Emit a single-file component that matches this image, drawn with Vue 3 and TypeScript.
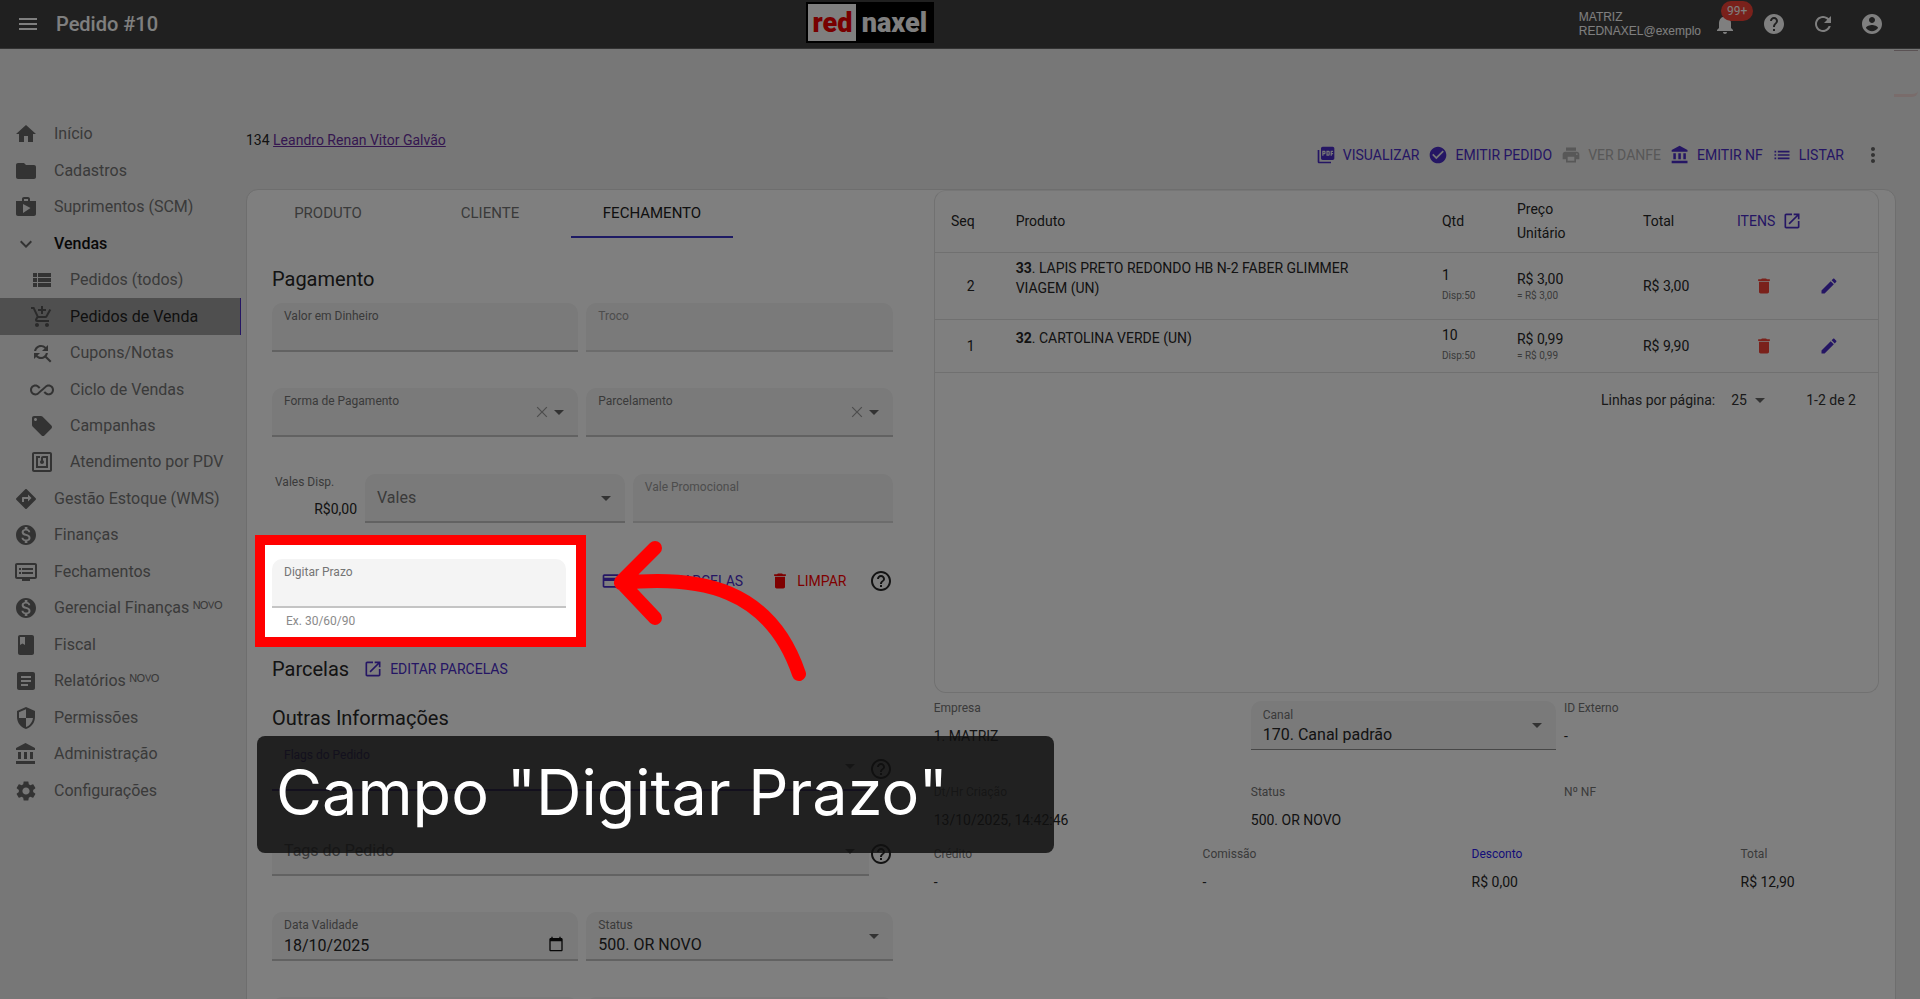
<script setup lang="ts">
import { ref } from 'vue'

const icons: Record<string, string> = {
  menu: 'M3 18h18v-2H3v2zm0-5h18v-2H3v2zm0-7v2h18V6H3z',
  home: 'M10 20v-6h4v6h5v-8h3L12 3 2 12h3v8z',
  folder: 'M10 4H4c-1.1 0-1.99.9-1.99 2L2 18c0 1.1.9 2 2 2h16c1.1 0 2-.9 2-2V8c0-1.1-.9-2-2-2h-8l-2-2z',
  shop: 'M16 6V4c0-1.11-.89-2-2-2h-4c-1.11 0-2 .89-2 2v2H2v13c0 1.11.89 2 2 2h16c1.11 0 2-.89 2-2V6h-6zm-6-2h4v2h-4V4zM9 18V9l7.5 4L9 18z',
  chevron: 'M7.41 8.59 12 13.17l4.59-4.58L18 10l-6 6-6-6 1.41-1.41z',
  viewList: 'M3 14h4v-4H3v4zm0 5h4v-4H3v4zM3 9h4V5H3v4zm5 5h13v-4H8v4zm0 5h13v-4H8v4zM8 5v4h13V5H8z',
  cart: 'M11 9h2V6h3V4h-3V1h-2v3H8v2h3v3zm-4 9c-1.1 0-1.99.9-1.99 2S5.9 22 7 22s2-.9 2-2-.9-2-2-2zm10 0c-1.1 0-1.99.9-1.99 2s.89 2 1.99 2 2-.9 2-2-.9-2-2-2zm-9.83-3.25.03-.12.9-1.63h7.45c.75 0 1.41-.41 1.75-1.03l3.86-7.01L19.42 4h-.01l-1.1 2-2.76 5H8.53l-.13-.27L6.16 6l-.95-2-.94-2H1v2h2l3.6 7.59-1.35 2.45c-.16.28-.25.61-.25.96 0 1.1.9 2 2 2h12v-2H7.42c-.13 0-.25-.11-.25-.25z',
  findReplace: 'M11 6c1.38 0 2.63.56 3.54 1.46L12 10h6V4l-2.05 2.05C14.68 4.78 12.93 4 11 4c-3.53 0-6.43 2.61-6.92 6H6.1c.46-2.28 2.48-4 4.9-4zm5.64 9.14c.66-.9 1.12-1.97 1.28-3.14H15.9c-.46 2.28-2.48 4-4.9 4-1.38 0-2.63-.56-3.54-1.46L10 12H4v6l2.05-2.05C7.32 17.22 9.07 18 11 18c1.55 0 2.98-.51 4.14-1.36L20 21.49 21.49 20l-4.85-4.86z',
  infinite: 'M18.6 6.62c-1.44 0-2.8.56-3.77 1.53L12 10.66 10.48 12h.01L7.8 14.39c-.64.64-1.49.99-2.4.99-1.87 0-3.39-1.51-3.39-3.38S3.53 8.62 5.4 8.62c.91 0 1.76.35 2.44 1.03l1.13 1 1.51-1.34L9.22 8.2C8.2 7.18 6.84 6.62 5.4 6.62 2.42 6.62 0 9.04 0 12s2.42 5.38 5.4 5.38c1.44 0 2.8-.56 3.77-1.53l2.83-2.5.01.01L13.52 12h-.01l2.69-2.39c.64-.64 1.49-.99 2.4-.99 1.87 0 3.39 1.51 3.39 3.38s-1.52 3.38-3.39 3.38c-.9 0-1.76-.35-2.44-1.03l-1.14-1.01-1.51 1.34 1.27 1.12c1.02 1.01 2.37 1.57 3.82 1.57 2.98 0 5.4-2.41 5.4-5.38s-2.42-5.37-5.4-5.37z',
  offer: 'M21.41 11.58l-9-9C12.05 2.22 11.55 2 11 2H4c-1.1 0-2 .9-2 2v7c0 .55.22 1.05.59 1.42l9 9c.36.36.86.58 1.41.58.55 0 1.05-.22 1.41-.59l7-7c.37-.36.59-.86.59-1.41 0-.55-.23-1.06-.59-1.42zM5.5 7C4.67 7 4 6.33 4 5.5S4.67 4 5.5 4 7 4.67 7 5.5 6.33 7 5.5 7z',
  nfc: 'M20 2H4c-1.1 0-2 .9-2 2v16c0 1.1.9 2 2 2h16c1.1 0 2-.9 2-2V4c0-1.1-.9-2-2-2zm0 18H4V4h16v16zM18 6h-5c-1.1 0-2 .9-2 2v2.28c-.6.35-1 .98-1 1.72 0 1.1.9 2 2 2s2-.9 2-2c0-.74-.4-1.38-1-1.72V8h3v8H8V8h2V6H6v12h12V6z',
  directions: 'M21.71 11.29l-9-9c-.39-.39-1.02-.39-1.41 0l-9 9c-.39.39-.39 1.02 0 1.41l9 9c.39.39 1.02.39 1.41 0l9-9c.39-.38.39-1.01 0-1.41zM14 14.5V12h-4v3H8v-4c0-.55.45-1 1-1h5V7.5l3.5 3.5-3.5 3.5z',
  money: 'M12 2C6.48 2 2 6.48 2 12s4.48 10 10 10 10-4.48 10-10S17.52 2 12 2zm1.41 16.09V20h-2.67v-1.93c-1.71-.36-3.16-1.46-3.27-3.4h1.96c.1 1.05.82 1.87 2.65 1.87 1.96 0 2.4-.98 2.4-1.59 0-.83-.44-1.61-2.67-2.14-2.48-.6-4.18-1.62-4.18-3.67 0-1.72 1.39-2.84 3.11-3.21V4h2.67v1.95c1.86.45 2.79 1.86 2.85 3.39H14.3c-.05-1.11-.64-1.87-2.22-1.87-1.5 0-2.4.68-2.4 1.64 0 .84.65 1.39 2.67 1.91s4.18 1.39 4.18 3.91c-.01 1.83-1.38 2.83-3.12 3.16z',
  dvr: 'M21 3H3c-1.1 0-2 .9-2 2v12c0 1.1.9 2 2 2h5v2h8v-2h5c1.1 0 1.99-.9 1.99-2L23 5c0-1.1-.9-2-2-2zm0 14H3V5h18v12zm-2-9H8v2h11V8zm0 4H8v2h11v-2zM7 8H5v2h2V8zm0 4H5v2h2v-2z',
  book: 'M18 2H6c-1.1 0-2 .9-2 2v16c0 1.1.9 2 2 2h12c1.1 0 2-.9 2-2V4c0-1.1-.9-2-2-2zM6 4h5v8l-2.5-1.5L6 12V4z',
  article: 'M19 3H5c-1.1 0-2 .9-2 2v14c0 1.1.9 2 2 2h14c1.1 0 2-.9 2-2V5c0-1.1-.9-2-2-2zm-5 14H7v-2h7v2zm3-4H7v-2h10v2zm0-4H7V7h10v2z',
  security: 'M12 1L3 5v6c0 5.55 3.84 10.74 9 12 5.16-1.26 9-6.45 9-12V5l-9-4zm0 10.99h7c-.53 4.12-3.28 7.79-7 8.94V12H5V6.3l7-3.11v8.8z',
  bank: 'M4 10v7h3v-7H4zm6 0v7h3v-7h-3zM2 22h19v-3H2v3zm14-12v7h3v-7h-3zm-4.5-9L2 6v2h19V6l-9.5-5z',
  settings: 'M19.14 12.94c.04-.3.06-.61.06-.94 0-.32-.02-.64-.07-.94l2.03-1.58c.18-.14.23-.41.12-.61l-1.92-3.32c-.12-.22-.37-.29-.59-.22l-2.39.96c-.5-.38-1.03-.7-1.62-.94l-.36-2.54c-.04-.24-.24-.41-.48-.41h-3.84c-.24 0-.43.17-.47.41l-.36 2.54c-.59.24-1.13.57-1.62.94l-2.39-.96c-.22-.08-.47 0-.59.22L2.74 8.87c-.12.21-.08.47.12.61l2.03 1.58c-.05.3-.09.63-.09.94s.02.64.07.94l-2.03 1.58c-.18.14-.23.41-.12.61l1.92 3.32c.12.22.37.29.59.22l2.39-.96c.5.38 1.03.7 1.62.94l.36 2.54c.05.24.24.41.48.41h3.84c.24 0 .44-.17.47-.41l.36-2.54c.59-.24 1.13-.56 1.62-.94l2.39.96c.22.08.47 0 .59-.22l1.92-3.32c.12-.22.07-.47-.12-.61l-2.01-1.58zM12 15.6c-1.98 0-3.6-1.62-3.6-3.6s1.62-3.6 3.6-3.6 3.6 1.62 3.6 3.6-1.62 3.6-3.6 3.6z',
  pdf: 'M20 2H8c-1.1 0-2 .9-2 2v12c0 1.1.9 2 2 2h12c1.1 0 2-.9 2-2V4c0-1.1-.9-2-2-2zm-8.5 7.5c0 .83-.67 1.5-1.5 1.5H9v2H7.5V7H10c.83 0 1.5.67 1.5 1.5v1zm5 2c0 .83-.67 1.5-1.5 1.5h-2.5V7H15c.83 0 1.5.67 1.5 1.5v3zm4-3H19v1h1.5V11H19v2h-1.5V7h3v1.5zM9 9.5h1v-1H9v1zM4 6H2v14c0 1.1.9 2 2 2h14v-2H4V6zm10 5.5h1v-3h-1v3z',
  check: 'M12 2C6.48 2 2 6.48 2 12s4.48 10 10 10 10-4.48 10-10S17.52 2 12 2zm-2 15l-5-5 1.41-1.41L10 14.17l7.59-7.59L19 8l-9 9z',
  print: 'M19 8H5c-1.66 0-3 1.34-3 3v6h4v4h12v-4h4v-6c0-1.66-1.34-3-3-3zm-3 11H8v-5h8v5zm3-7c-.55 0-1-.45-1-1s.45-1 1-1 1 .45 1 1-.45 1-1 1zm-1-9H6v4h12V3z',
  list: 'M3 13h2v-2H3v2zm0 4h2v-2H3v2zm0-8h2V7H3v2zm4 4h14v-2H7v2zm0 4h14v-2H7v2zM7 7v2h14V7H7z',
  more: 'M12 8c1.1 0 2-.9 2-2s-.9-2-2-2-2 .9-2 2 .9 2 2 2zm0 2c-1.1 0-2 .9-2 2s.9 2 2 2 2-.9 2-2-.9-2-2-2zm0 6c-1.1 0-2 .9-2 2s.9 2 2 2 2-.9 2-2-.9-2-2-2z',
  bell: 'M12 22c1.1 0 2-.9 2-2h-4c0 1.1.89 2 2 2zm6-6v-5c0-3.07-1.64-5.64-4.5-6.32V4c0-.83-.67-1.5-1.5-1.5s-1.5.67-1.5 1.5v.68C7.63 5.36 6 7.92 6 11v5l-2 2v1h16v-1l-2-2z',
  help: 'M12 2C6.48 2 2 6.48 2 12s4.48 10 10 10 10-4.48 10-10S17.52 2 12 2zm1 17h-2v-2h2v2zm2.07-7.75l-.9.92C13.45 12.9 13 13.5 13 15h-2v-.5c0-1.1.45-2.1 1.17-2.83l1.24-1.26c.37-.36.59-.86.59-1.41 0-1.1-.9-2-2-2s-2 .9-2 2H8c0-2.21 1.79-4 4-4s4 1.79 4 4c0 .88-.36 1.68-.93 2.25z',
  helpOutline: 'M11 18h2v-2h-2v2zm1-16C6.48 2 2 6.48 2 12s4.48 10 10 10 10-4.48 10-10S17.52 2 12 2zm0 18c-4.41 0-8-3.59-8-8s3.59-8 8-8 8 3.59 8 8-3.59 8-8 8zm0-14c-2.21 0-4 1.79-4 4h2c0-1.1.9-2 2-2s2 .9 2 2c0 2-3 1.75-3 5h2c0-2.25 3-2.5 3-5 0-2.21-1.79-4-4-4z',
  refresh: 'M17.65 6.35C16.2 4.9 14.21 4 12 4c-4.42 0-7.99 3.58-7.99 8s3.57 8 7.99 8c3.73 0 6.84-2.55 7.73-6h-2.08c-.82 2.33-3.04 4-5.65 4-3.31 0-6-2.69-6-6s2.69-6 6-6c1.66 0 3.14.69 4.22 1.78L13 11h7V4l-2.35 2.35z',
  account: 'M12 2C6.48 2 2 6.48 2 12s4.48 10 10 10 10-4.48 10-10S17.52 2 12 2zm0 3c1.66 0 3 1.34 3 3s-1.34 3-3 3-3-1.34-3-3 1.34-3 3-3zm0 14.2c-2.5 0-4.71-1.28-6-3.22.03-1.99 4-3.08 6-3.08 1.99 0 5.97 1.09 6 3.08-1.29 1.94-3.5 3.22-6 3.22z',
  trash: 'M6 19c0 1.1.9 2 2 2h8c1.1 0 2-.9 2-2V7H6v12zM19 4h-3.5l-1-1h-5l-1 1H5v2h14V4z',
  edit: 'M3 17.25V21h3.75L17.81 9.94l-3.75-3.75L3 17.25zM20.71 7.04c.39-.39.39-1.02 0-1.41l-2.34-2.34c-.39-.39-1.02-.39-1.41 0l-1.83 1.83 3.75 3.75 1.83-1.83z',
  open: 'M19 19H5V5h7V3H5c-1.11 0-2 .9-2 2v14c0 1.1.89 2 2 2h14c1.1 0 2-.9 2-2v-7h-2v7zM14 3v2h3.59l-9.83 9.83 1.41 1.41L19 6.41V10h2V3h-7z',
  card: 'M20 4H4c-1.11 0-1.99.89-1.99 2L2 18c0 1.11.89 2 2 2h16c1.11 0 2-.89 2-2V6c0-1.11-.89-2-2-2zm0 14H4v-6h16v6zm0-10H4V6h16v2z',
  arrow: 'M7 10l5 5 5-5z',
  close: 'M18.3 6.7l-1-1L12 11 6.7 5.7l-1 1L11 12l-5.3 5.3 1 1L12 13l5.3 5.3 1-1L13 12z',
  calendar: 'M20 3h-1V1h-2v2H7V1H5v2H4c-1.1 0-2 .9-2 2v16c0 1.1.9 2 2 2h16c1.1 0 2-.9 2-2V5c0-1.1-.9-2-2-2zm0 18H4V8h16v13z',
}

interface NavItem { label: string; icon: string; sub?: boolean; open?: boolean; active?: boolean; isNew?: boolean }
const nav: NavItem[] = [
  { label: 'Início', icon: 'home' },
  { label: 'Cadastros', icon: 'folder' },
  { label: 'Suprimentos (SCM)', icon: 'shop' },
  { label: 'Vendas', icon: 'chevron', open: true },
  { label: 'Pedidos (todos)', icon: 'viewList', sub: true },
  { label: 'Pedidos de Venda', icon: 'cart', sub: true, active: true },
  { label: 'Cupons/Notas', icon: 'findReplace', sub: true },
  { label: 'Ciclo de Vendas', icon: 'infinite', sub: true },
  { label: 'Campanhas', icon: 'offer', sub: true },
  { label: 'Atendimento por PDV', icon: 'nfc', sub: true },
  { label: 'Gestão Estoque (WMS)', icon: 'directions' },
  { label: 'Finanças', icon: 'money' },
  { label: 'Fechamentos', icon: 'dvr' },
  { label: 'Gerencial Finanças', icon: 'money', isNew: true },
  { label: 'Fiscal', icon: 'book' },
  { label: 'Relatórios', icon: 'article', isNew: true },
  { label: 'Permissões', icon: 'security' },
  { label: 'Administração', icon: 'bank' },
  { label: 'Configurações', icon: 'settings' },
]

const actions = [
  { label: 'VISUALIZAR', icon: 'pdf', disabled: false },
  { label: 'EMITIR PEDIDO', icon: 'check', disabled: false },
  { label: 'VER DANFE', icon: 'print', disabled: true },
  { label: 'EMITIR NF', icon: 'bank', disabled: false },
  { label: 'LISTAR', icon: 'list', disabled: false },
]

const tabs = ['PRODUTO', 'CLIENTE', 'FECHAMENTO']
const tab = ref('FECHAMENTO')

const items = [
  { seq: 2, code: '33', name: 'LAPIS PRETO REDONDO HB N-2 FABER GLIMMER VIAGEM (UN)', qty: 1, stock: 50, price: 'R$ 3,00', total: 'R$ 3,00' },
  { seq: 1, code: '32', name: 'CARTOLINA VERDE (UN)', qty: 10, stock: 50, price: 'R$ 0,99', total: 'R$ 9,90' },
]

const cash = ref('')
const change = ref('')
const promo = ref('')
const term = ref('')
const validity = ref('18/10/2025')
</script>

<template>
  <div class="page">
    <header class="topbar">
      <div class="topbar-left">
        <button class="icon-btn" aria-label="Menu"><svg class="icon" viewBox="0 0 24 24"><path :d="icons.menu" /></svg></button>
        <h1>Pedido #10</h1>
      </div>
      <div class="logo"><span class="logo-red">red</span><span class="logo-rest">naxel</span></div>
      <div class="topbar-right">
        <div class="tenant">MATRIZ<br>REDNAXEL@exemplo</div>
        <button class="icon-btn bell" aria-label="Notificações">
          <svg class="icon" viewBox="0 0 24 24"><path :d="icons.bell" /></svg>
          <span class="badge">99+</span>
        </button>
        <button class="icon-btn" aria-label="Ajuda"><svg class="icon" viewBox="0 0 24 24"><path :d="icons.help" /></svg></button>
        <button class="icon-btn" aria-label="Atualizar"><svg class="icon" viewBox="0 0 24 24"><path :d="icons.refresh" /></svg></button>
        <button class="icon-btn" aria-label="Conta"><svg class="icon" viewBox="0 0 24 24"><path :d="icons.account" /></svg></button>
      </div>
    </header>

    <div class="toast-edge"></div>

    <div class="body">
      <nav class="sidebar">
        <a v-for="item in nav" :key="item.label" href="#" :class="{ sub: item.sub, open: item.open, active: item.active }">
          <svg class="icon" viewBox="0 0 24 24"><path :d="icons[item.icon]" /></svg>
          <span>{{ item.label }} <span v-if="item.isNew" class="new">ᴺᴼⱽᴼ</span></span>
        </a>
      </nav>

      <main>
        <div class="heading">
          <p class="client">134 <a href="#">Leandro Renan Vitor Galvão</a></p>
          <div class="toolbar">
            <button v-for="a in actions" :key="a.label" class="text-btn" :disabled="a.disabled">
              <svg class="icon small" viewBox="0 0 24 24"><path :d="icons[a.icon]" /></svg>{{ a.label }}
            </button>
            <button class="icon-btn more" aria-label="Mais opções"><svg class="icon" viewBox="0 0 24 24"><path :d="icons.more" /></svg></button>
          </div>
        </div>

        <div class="card">
          <section class="left">
            <div class="tabs" role="tablist">
              <button v-for="t in tabs" :key="t" role="tab" :aria-selected="t === tab" :class="{ selected: t === tab }" @click="tab = t">{{ t }}</button>
            </div>

            <form class="form" @submit.prevent>
              <h2>Pagamento</h2>
              <div class="row two">
                <div class="field">
                  <div class="stack"><label for="cash">Valor em Dinheiro</label><input id="cash" v-model="cash"></div>
                </div>
                <div class="field disabled">
                  <div class="stack"><label for="change">Troco</label><input id="change" v-model="change" disabled></div>
                </div>
              </div>
              <div class="row two">
                <div class="field">
                  <div class="stack"><label for="method">Forma de Pagamento</label><select id="method"><option></option></select></div>
                  <button class="clear" type="button" aria-label="Limpar forma de pagamento"><svg viewBox="0 0 24 24"><path :d="icons.close" /></svg></button>
                  <svg class="caret" viewBox="0 0 24 24"><path :d="icons.arrow" /></svg>
                </div>
                <div class="field">
                  <div class="stack"><label for="split">Parcelamento</label><select id="split"><option></option></select></div>
                  <button class="clear" type="button" aria-label="Limpar parcelamento"><svg viewBox="0 0 24 24"><path :d="icons.close" /></svg></button>
                  <svg class="caret" viewBox="0 0 24 24"><path :d="icons.arrow" /></svg>
                </div>
              </div>
              <div class="row vouchers">
                <dl class="voucher-sum"><dt>Vales Disp.</dt><dd>R$0,00</dd></dl>
                <div class="field resting">
                  <div class="stack"><label for="voucher">Vales</label><select id="voucher"><option></option></select></div>
                  <svg class="caret" viewBox="0 0 24 24"><path :d="icons.arrow" /></svg>
                </div>
                <div class="field disabled">
                  <div class="stack"><label for="promo">Vale Promocional</label><input id="promo" v-model="promo" disabled></div>
                </div>
              </div>
              <div class="row term-row">
                <div class="term">
                  <div class="field">
                    <div class="stack"><label for="term">Digitar Prazo</label><input id="term" v-model="term" aria-describedby="term-help"></div>
                  </div>
                  <p id="term-help" class="helper">Ex. 30/60/90</p>
                  <div class="guide">
                    <div class="spotlight"></div>
                    <svg class="pointer" viewBox="0 0 210 150"><path d="M62 18 L28 52 L62 88 M28 53 C107 45 177 58 206 144" /></svg>
                    <p class="caption">Campo "Digitar Prazo"</p>
                  </div>
                </div>
                <div class="term-actions">
                  <button class="text-btn" type="button"><svg class="icon small" viewBox="0 0 24 24"><path :d="icons.card" /></svg>GERAR PARCELAS</button>
                  <button class="text-btn danger" type="button"><svg class="icon small" viewBox="0 0 24 24"><path :d="icons.trash" /></svg>LIMPAR</button>
                  <button class="icon-btn" type="button" aria-label="Ajuda sobre o prazo"><svg class="icon" viewBox="0 0 24 24"><path :d="icons.helpOutline" /></svg></button>
                </div>
              </div>

              <h2>Parcelas <button class="text-btn" type="button"><svg class="icon small" viewBox="0 0 24 24"><path :d="icons.open" /></svg>EDITAR PARCELAS</button></h2>
              <h2>Outras Informações</h2>
              <div class="row helped">
                <div class="field focused">
                  <div class="stack"><label for="flags">Flags do Pedido</label><select id="flags"><option></option></select></div>
                  <svg class="caret" viewBox="0 0 24 24"><path :d="icons.arrow" /></svg>
                </div>
                <button class="icon-btn" type="button" aria-label="Ajuda sobre flags"><svg class="icon" viewBox="0 0 24 24"><path :d="icons.helpOutline" /></svg></button>
              </div>
              <div class="row helped">
                <div class="field resting">
                  <div class="stack"><label for="tags">Tags do Pedido</label><select id="tags"><option></option></select></div>
                  <svg class="caret" viewBox="0 0 24 24"><path :d="icons.arrow" /></svg>
                </div>
                <button class="icon-btn" type="button" aria-label="Ajuda sobre tags"><svg class="icon" viewBox="0 0 24 24"><path :d="icons.helpOutline" /></svg></button>
              </div>
              <div class="row two">
                <div class="field">
                  <div class="stack"><label for="validity">Data Validade</label><input id="validity" v-model="validity"></div>
                  <button class="date-btn" type="button" aria-label="Abrir calendário"><svg viewBox="0 0 24 24"><path :d="icons.calendar" /></svg></button>
                </div>
                <div class="field">
                  <div class="stack"><label for="status">Status</label><select id="status"><option>500. OR NOVO</option></select></div>
                  <svg class="caret" viewBox="0 0 24 24"><path :d="icons.arrow" /></svg>
                </div>
              </div>
              <div class="row two">
                <div class="field"></div>
                <div class="field"></div>
              </div>
            </form>
          </section>

          <section class="right">
            <div class="panel">
              <table>
                <colgroup><col class="c-seq"><col><col class="c-qty"><col class="c-price"><col class="c-total"><col class="c-act"></colgroup>
                <thead>
                  <tr>
                    <th class="seq">Seq</th><th>Produto</th><th>Qtd</th><th>Preço<br>Unitário</th><th>Total</th>
                    <th><button class="text-btn">ITENS<svg class="icon small" viewBox="0 0 24 24"><path :d="icons.open" /></svg></button></th>
                  </tr>
                </thead>
                <tbody>
                  <tr v-for="it in items" :key="it.seq">
                    <td class="seq">{{ it.seq }}</td>
                    <td class="product"><b>{{ it.code }}</b>. {{ it.name }}</td>
                    <td>{{ it.qty }}<small class="stock">Disp:{{ it.stock }}</small></td>
                    <td>{{ it.price }}<small>= {{ it.price }}</small></td>
                    <td>{{ it.total }}</td>
                    <td>
                      <div class="row-actions">
                        <button class="icon-btn del" aria-label="Excluir item"><svg class="icon small" viewBox="0 0 24 24"><path :d="icons.trash" /></svg></button>
                        <button class="icon-btn edit" aria-label="Editar item"><svg class="icon small" viewBox="0 0 24 24"><path :d="icons.edit" /></svg></button>
                      </div>
                    </td>
                  </tr>
                </tbody>
              </table>
              <div class="pager">
                <label for="per-page">Linhas por página:</label>
                <span class="per-page"><select id="per-page"><option>25</option></select><svg class="caret" viewBox="0 0 24 24"><path :d="icons.arrow" /></svg></span>
                <span>1-2 de 2</span>
              </div>
            </div>

            <div class="info three first">
              <dl><dt>Empresa</dt><dd>1. MATRIZ</dd></dl>
              <div class="field channel">
                <div class="stack"><label for="channel">Canal</label><select id="channel"><option>170. Canal padrão</option></select></div>
                <svg class="caret" viewBox="0 0 24 24"><path :d="icons.arrow" /></svg>
              </div>
              <dl><dt>ID Externo</dt><dd>-</dd></dl>
            </div>
            <div class="info three second">
              <dl><dt>Dt/Hr Criação</dt><dd>13/10/2025, 14:42:46</dd></dl>
              <dl class="status"><dt>Status</dt><dd>500. OR NOVO</dd></dl>
              <dl><dt>Nº NF</dt><dd></dd></dl>
            </div>
            <div class="info four">
              <dl><dt>Crédito</dt><dd>-</dd></dl>
              <dl><dt>Comissão</dt><dd>-</dd></dl>
              <dl><dt><a href="#">Desconto</a></dt><dd>R$ 0,00</dd></dl>
              <dl><dt>Total</dt><dd>R$ 12,90</dd></dl>
            </div>
          </section>
        </div>
      </main>
    </div>
  </div>
</template>

<style>
body { background: #eee; }
</style>

<style scoped>
.page {
  --accent: #4a2cc8;
  --muted: #757575;
  position: relative;
  height: 100vh;
  overflow: hidden;
  background: #eee;
  color: #262626;
  font: 14px/20px Roboto, sans-serif;
}
* { box-sizing: border-box; }
h1, h2, p, dl, dd { margin: 0; }
button, input, select { font: inherit; color: inherit; border: 0; padding: 0; margin: 0; background: none; outline: 0; }
select { appearance: none; opacity: 1; }
button { cursor: pointer; }
.icon { display: block; width: 24px; height: 24px; fill: currentColor; flex: none; }
.icon.small { width: 20px; height: 20px; }
.icon-btn { display: grid; place-items: center; }

.topbar { display: grid; grid-template-columns: 9fr auto 11fr; align-items: center; height: 49px; background: #414141; color: #fff; border-bottom: 1px solid #666; }
.topbar-left { display: flex; align-items: center; gap: 16px; padding-left: 16px; }
h1 { font-size: 20px; font-weight: 500; line-height: 24px; }
.logo { display: flex; align-self: start; height: 41px; margin-top: 2px; padding: 2px; background: #000; font-family: Roboto, sans-serif; font-size: 27px; font-weight: 900; line-height: 38px; }
.logo-red { width: 48px; background: #fff; color: #f00000; text-align: center; }
.logo-rest { width: 76px; text-align: center; }
.topbar-right { display: flex; align-items: center; justify-content: flex-end; gap: 25px; padding-right: 36px; }
.tenant { margin-right: -13px; font: 12px/14px "Liberation Sans", sans-serif; }
.bell { position: relative; }
.badge { position: absolute; left: 8px; top: -11px; padding: 0 6px; border-radius: 10px; background: #f44336; font-size: 12px; line-height: 20px; }
.toast-edge { position: absolute; top: 50px; right: 2px; width: 24px; height: 47px; border-top: 1px solid #b4a4a8; border-bottom: 3px solid #f2d8d6; border-bottom-right-radius: 6px; }

.body { display: flex; }
.sidebar { display: flex; flex-direction: column; flex: none; width: 241px; height: 760px; padding-top: 67px; font-size: 16px; }
.sidebar a { display: flex; flex: 1; align-items: center; gap: 16px; padding-left: 14px; color: var(--muted); text-decoration: none; white-space: nowrap; }
.sidebar a .icon { color: #666; }
.sidebar a.sub { padding-left: 30px; }
.sidebar a.open { color: #111; font-weight: 500; }
.sidebar a.active { background: #9e9e9e; color: #212121; border-right: 1px solid var(--accent); }
.sidebar a.active .icon { color: #555; }

main { flex: 1; min-width: 0; padding: 76px 24px 0 5px; }
.heading { display: flex; justify-content: space-between; height: 64px; padding-right: 11px; }
.client { line-height: 30px; }
.client a { color: #6a2fa0; }
.toolbar { display: flex; align-items: center; gap: 9px; height: 36px; margin-top: 12px; }
.text-btn { display: inline-flex; align-items: center; gap: 7px; color: var(--accent); font-size: 14px; line-height: 20px; white-space: nowrap; }
.text-btn:disabled { color: #b0b0b0; }
.text-btn.danger { color: #f00; }
.more { margin-left: 8px; color: #666; }

.card { display: grid; grid-template-columns: 5fr 7fr; border: 1px solid #dcdcdc; border-radius: 12px; background: #fff; }
.tabs { display: flex; height: 48px; }
.tabs button { width: 162px; color: var(--muted); font-size: 15px; border-bottom: 2px solid transparent; }
.tabs button.selected { color: #212121; border-bottom-color: #3a35c8; }
.form { padding: 16px 41px 0 25px; }
h2 { display: flex; align-items: center; gap: 14px; height: 49px; font-size: 20px; font-weight: 400; line-height: 24px; }
.row { display: grid; gap: 0 8px; height: 85px; align-items: start; }
.two { grid-template-columns: 1fr 1fr; }
.vouchers { grid-template-columns: 85px 1fr 1fr; height: 86px; padding-top: 1px; }
.voucher-sum dt { padding-left: 3px; color: var(--muted); font-size: 12px; line-height: 16px; }
.voucher-sum dd { margin-top: 9px; text-align: right; }

.field { position: relative; display: flex; align-items: center; height: 49px; padding: 0 7px 0 12px; border-bottom: 2px solid #c4c4c4; border-radius: 10px 10px 0 0; background: #f4f4f4; }
.stack { display: flex; flex-direction: column; flex: 1; min-width: 0; height: 47px; padding-top: 5px; }
.stack label { color: var(--muted); font-size: 12px; line-height: 16px; }
.stack input, .stack select { width: 100%; height: 24px; font-size: 16px; }
.field.disabled { border-bottom-color: #d8d8d8; }
.field.disabled label { color: #9a9a9a; }
.field.focused { border-bottom-color: var(--accent); }
.field.focused label { color: var(--accent); }
.resting .stack { padding-top: 0; }
.resting label { font-size: 16px; line-height: 48px; }
.resting select { position: absolute; inset: 0; height: 100%; }
.caret { flex: none; width: 24px; height: 24px; fill: #666; pointer-events: none; }
.clear { width: 20px; height: 20px; margin-right: -5px; color: #999; }
.clear svg { display: block; fill: currentColor; }
.date-btn { align-self: flex-end; width: 16px; height: 16px; margin: 0 7px 7px 0; color: #111; }
.date-btn svg { display: block; fill: currentColor; }

.term-row { grid-template-columns: 294px 1fr; }
.term { position: relative; }
.helper { margin-top: 5px; padding-left: 14px; color: #8a8a8a; font-size: 12px; line-height: 16px; }
.term-actions { display: flex; align-items: center; height: 44px; padding-left: 27px; }
.term-actions .danger { margin-left: 27px; }
.term-actions .icon-btn { margin-left: auto; }
.helped { grid-template-columns: 1fr 24px; gap: 0; }
.helped .icon-btn { height: 54px; }

.guide { position: absolute; inset: 0; z-index: 5; pointer-events: none; }
.spotlight { position: absolute; left: -17px; top: -24px; width: 331px; height: 112px; border: 10px solid #f00; box-shadow: 0 0 0 3000px rgba(0, 0, 0, .5); }
.pointer { position: absolute; left: 321px; top: -29px; width: 210px; height: 150px; fill: none; stroke: #f00; stroke-width: 14; stroke-linecap: round; stroke-linejoin: round; overflow: visible; }
.caption { position: absolute; left: -15px; top: 177px; width: 797px; height: 117px; padding-left: 19px; border-radius: 8px; background: rgba(15, 15, 15, .84); color: #fff; font: 63px/112px Inter, sans-serif; white-space: nowrap; }

.right { padding-right: 16px; }
.panel { min-height: 503px; border: 1px solid #e2e2e2; border-top-color: #ececec; border-radius: 12px; }
table { width: 100%; border-collapse: collapse; table-layout: fixed; }
.c-seq { width: 65px; }
.c-qty { width: 75px; }
.c-price { width: 126px; }
.c-total { width: 94px; }
.c-act { width: 157px; }
th, td { padding: 5px 0 5px 16px; border-bottom: 1px solid #e0e0e0; text-align: left; font-weight: 400; }
th { line-height: 24px; padding: 6px 0 7px 16px; }
.seq { padding-left: 0; padding-right: 25px; text-align: right; }
.product { padding-right: 56px; padding-bottom: 21px; }
small { display: block; color: var(--muted); font-size: 10px; line-height: 14px; }
.stock { line-height: 22px; }
.row-actions { display: flex; gap: 45px; padding-left: 17px; }
.del { color: #f44336; }
.edit { color: var(--accent); }
.pager { display: flex; justify-content: flex-end; align-items: center; height: 54px; padding-right: 22px; color: #333; }
.per-page { display: flex; align-items: center; margin: 0 34px 0 16px; }
.per-page select { width: 17px; }

.info { display: grid; }
.three { grid-template-columns: repeat(3, 1fr); }
.four { grid-template-columns: 2fr 2fr 2fr 1fr; padding-right: 4px; }
.first { margin-top: 7px; height: 84px; align-items: start; }
.second { height: 62px; }
.info dt { color: var(--muted); font-size: 12px; line-height: 16px; }
.info dt a { color: #2a1af0; text-decoration: none; }
.info dd { margin-top: 10px; min-height: 20px; }
.status { padding-left: 2px; }
.channel { margin: 1px 8px 0 2px; border-bottom: 1px solid #8e8e8e; }
</style>
